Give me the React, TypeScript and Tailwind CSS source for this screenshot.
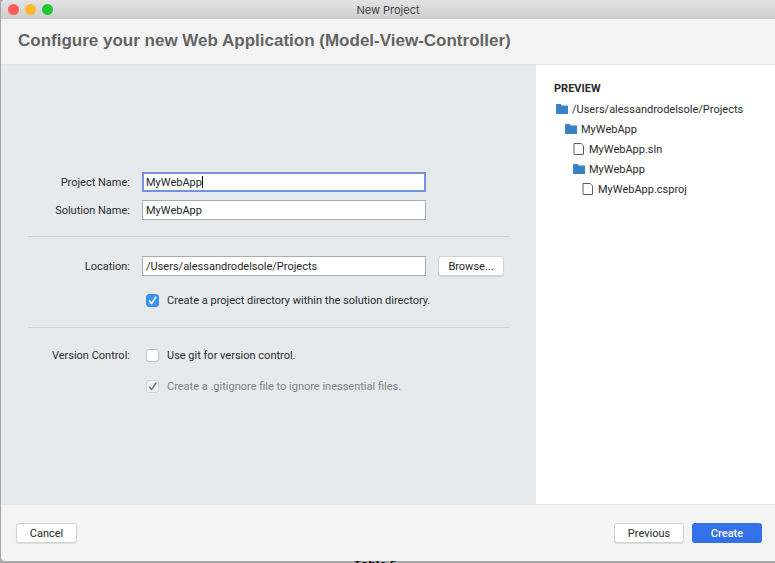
import { useState } from "react";
import type { ReactNode } from "react";

function CheckBox({
  id,
  label,
  checked,
  disabled,
  onChange,
}: {
  id: string;
  label: string;
  checked: boolean;
  disabled?: boolean;
  onChange?: (value: boolean) => void;
}) {
  return (
    <div className="flex h-4 items-center gap-2">
      <span className="ml-1 grid size-[13px] place-items-center">
        <input
          id={id}
          type="checkbox"
          checked={checked}
          disabled={disabled}
          onChange={(e) => onChange?.(e.target.checked)}
          className="col-start-1 row-start-1 size-[13px] appearance-none rounded-[3px] border border-[#bdbfc4] bg-white checked:enabled:border-[#338ef0] checked:enabled:bg-[#3b93f3] disabled:border-[#cfd1d4] disabled:bg-[#f2f3f4]"
        />
        {checked && (
          <svg
            viewBox="0 0 13 13"
            className={`pointer-events-none col-start-1 row-start-1 size-[13px] ${disabled ? "text-[#77797b]" : "text-white"}`}
            fill="none"
            stroke="currentColor"
            strokeWidth="1.6"
            strokeLinecap="round"
            strokeLinejoin="round"
          >
            <path d="M3.5 7 5.6 9.6 9.7 3.2" />
          </svg>
        )}
      </span>
      <label htmlFor={id} className={disabled ? "pt-0.5 text-[#808385]" : "pt-0.5"}>
        {label}
      </label>
    </div>
  );
}

function Row({ label, htmlFor, children }: { label?: string; htmlFor?: string; children: ReactNode }) {
  return (
    <div className="flex items-center gap-3">
      <div className="flex h-4 w-[102px] shrink-0 items-center justify-end">
        {label &&
          (htmlFor ? (
            <label htmlFor={htmlFor} className="pt-0.5">
              {label}
            </label>
          ) : (
            <span className="pt-0.5">{label}</span>
          ))}
      </div>
      {children}
    </div>
  );
}

function FolderIcon() {
  return (
    <svg viewBox="0 0 12 10" className="h-[10px] w-3 shrink-0" fill="#3582c4">
      <path d="M0 .8Q0 0 .8 0H4.6L5.9 1.6H11.3Q12 1.6 12 2.3V9.3Q12 10 11.3 10H.7Q0 10 0 9.3Z" />
    </svg>
  );
}

function FileIcon() {
  return (
    <svg viewBox="0 0 12 12" className="size-3 shrink-0" fill="white" stroke="#5d5d60" strokeWidth="1">
      <path d="M1 .5H8.2L10.5 2.8V11Q10.5 11.5 10 11.5H1.5Q1 11.5 1 11Z" />
    </svg>
  );
}

const tree = [
  { name: "/Users/alessandrodelsole/Projects", folder: true, indent: "pl-0.5" },
  { name: "MyWebApp", folder: true, indent: "pl-[11px]" },
  { name: "MyWebApp.sln", folder: false, indent: "pl-[19px]" },
  { name: "MyWebApp", folder: true, indent: "pl-[19px]" },
  { name: "MyWebApp.csproj", folder: false, indent: "pl-7" },
];

const field =
  "h-5 w-[284px] border border-[#a9abae] bg-white px-[3px] text-[11px] text-[#262626] outline-none";
const button =
  "h-5 rounded-[3px] border border-[#d2d2d4] bg-white pt-0.5 text-center text-[11px] leading-4 text-[#262626] shadow-[0_1px_1px_rgba(0,0,0,0.1)]";

export default function App() {
  const [location, setLocation] = useState("/Users/alessandrodelsole/Projects");
  const [project, setProject] = useState("MyWebApp");
  const [solution, setSolution] = useState("MyWebApp");
  const [directory, setDirectory] = useState(true);
  const [git, setGit] = useState(false);

  return (
    <div className="flex min-h-screen flex-col bg-[#a6a6a6] font-[Roboto,sans-serif] text-[11px] leading-4 text-[#2b2b2c]">
      <div className="ml-px flex flex-1 flex-col overflow-hidden rounded-tl-[4px] rounded-bl-[4px] bg-[#f4f4f4]">
        <div className="grid h-[19px] grid-cols-[1fr_auto_1fr] items-center border-b border-[#c9c9c9] bg-linear-to-b from-[#e3e3e3] to-[#d0d0d0]">
          <div className="flex gap-[6px] pl-[7px]">
            <button aria-label="Close" className="size-[11px] rounded-full bg-[#fc5b57]" />
            <button aria-label="Minimize" className="size-[11px] rounded-full bg-[#fdb92c]" />
            <button aria-label="Zoom" className="size-[11px] rounded-full bg-[#1fc636]" />
          </div>
          <span className="pt-0.5 font-[Inter,sans-serif] text-[#454545]">New Project</span>
        </div>
        <header className="flex h-[46px] items-center border-b border-[#e2e3e5] pb-0.5 pl-[17px]">
          <h1 className="font-['Liberation_Sans',Arial,sans-serif] text-[17px] leading-6 font-bold text-[#646464]">
            Configure your new Web Application (Model-View-Controller)
          </h1>
        </header>

        <div className="flex flex-1">
          <main className="flex flex-1 flex-col justify-center bg-[#e6eaed] pr-[26px] pb-[3px] pl-[27px]">
            <section className="flex flex-col gap-2 pb-4">
              <Row label="Project Name:" htmlFor="project">
                <div className="relative">
                  <input
                    id="project"
                    value={project}
                    onChange={(e) => setProject(e.target.value)}
                    className="block h-5 w-[284px] border-2 border-[#7391dc] bg-white px-0.5 text-[11px] text-[#262626] outline-none"
                  />
                  {project === "MyWebApp" && (
                    <span className="pointer-events-none absolute top-1 left-[60px] h-3 w-px bg-black" />
                  )}
                </div>
              </Row>
              <Row label="Solution Name:" htmlFor="solution">
                <input id="solution" value={solution} onChange={(e) => setSolution(e.target.value)} className={field} />
              </Row>
            </section>
            <section className="flex flex-col gap-4 border-y border-[#d0d4d8] py-[19px]">
              <Row label="Location:" htmlFor="location">
                <input id="location" value={location} onChange={(e) => setLocation(e.target.value)} className={field} />
                <button className={`${button} w-[66px]`}>Browse...</button>
              </Row>
              <Row>
                <CheckBox
                  id="directory"
                  label="Create a project directory within the solution directory."
                  checked={directory}
                  onChange={setDirectory}
                />
              </Row>
            </section>
            <section className="flex flex-col gap-[15px] pt-[19px]">
              <Row label="Version Control:">
                <CheckBox id="git" label="Use git for version control." checked={git} onChange={setGit} />
              </Row>
              <Row>
                <CheckBox
                  id="ignore"
                  label="Create a .gitignore file to ignore inessential files."
                  checked
                  disabled
                />
              </Row>
            </section>
          </main>
          <aside className="w-[239px] bg-white pt-4 pl-[18px]">
            <h2 className="font-bold">PREVIEW</h2>
            <ul className="mt-1 flex flex-col gap-1">
              {tree.map((item, i) => (
                <li key={i} className={`flex h-4 items-center gap-1 ${item.indent}`}>
                  {item.folder ? <FolderIcon /> : <FileIcon />}
                  <span className="pt-0.5">{item.name}</span>
                </li>
              ))}
            </ul>
          </aside>
        </div>

        <footer className="flex h-[57px] items-center gap-2 border-t border-[#e2e2e4] pr-[13px] pl-[15px]">
          <button className={`${button} w-[61px]`}>Cancel</button>
          <button className={`${button} ml-auto w-[70px]`}>Previous</button>
          <button className="h-5 w-[70px] rounded-[3px] bg-[#3371e8] pt-0.5 text-center leading-4 font-medium text-white">
            Create
          </button>
        </footer>
      </div>
      <div className="h-0.5 overflow-hidden pl-[354px] font-['Open_Sans',sans-serif] text-[12px] font-bold text-black">
        <div className="-mt-1">Table 6</div>
      </div>
    </div>
  );
}
